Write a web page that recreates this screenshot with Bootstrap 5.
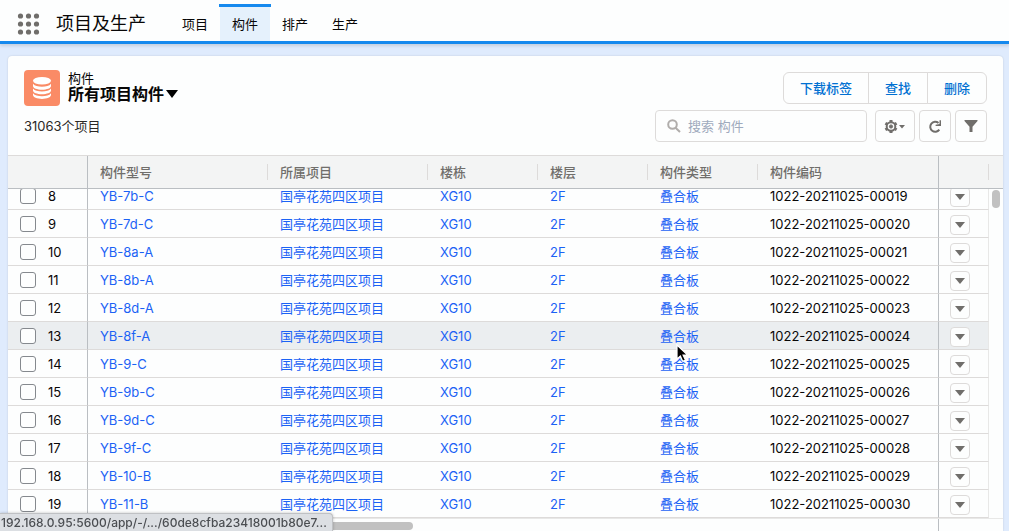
<!DOCTYPE html>
<html lang="zh-CN">
<head>
<meta charset="utf-8">
<meta name="viewport" content="width=device-width, initial-scale=1">
<title>项目及生产</title>
<link href="https://cdn.jsdelivr.net/npm/bootstrap@5.3.0/dist/css/bootstrap.min.css" rel="stylesheet">
<script src="https://cdn.jsdelivr.net/npm/bootstrap@5.3.0/dist/js/bootstrap.bundle.min.js" defer></script>
<style>
body{font-family:Inter,"Noto Sans CJK SC",sans-serif;font-size:13px;line-height:20px;color:#080707;background:#dfebfd}
a{text-decoration:none}
.app-bar{background:#fdfefe;border-bottom:3px solid #1589ee;height:44px;box-shadow:0 2px 3px rgba(0,0,0,.12)}
.launcher{width:24px;height:24px;margin:12px 0 0 16px}
.app-title{font-size:18px;font-weight:400;line-height:28px;margin:10px 24px 0 16px}
.app-tab{color:#080707;padding:14px 12px 7px;line-height:20px}
.app-tab.active{position:relative;background:linear-gradient(transparent 4px,#e5f1fc 4px)}
.app-tab.active::before{content:"";position:absolute;top:4px;left:-1px;right:-1px;height:3px;background:#1589ee}
.panel{background:#fdfefe;border-radius:4px 4px 0 0;margin:12px 6px 0 8px;box-shadow:0 0 2px rgba(0,0,0,.15)}
.panel-head{padding:14px 16px 0}
.actions{margin-top:2px}
.tools{padding:4px 16px 13px}
.object-icon{width:36px;height:36px;border-radius:4px;background:#fa8b66}
.kind{line-height:16px}
.view-btn{font-size:16px;font-weight:700;line-height:16px;color:#080707}
.view-btn svg{margin-left:2px}
.count{line-height:16px;color:#2b2826}
.tool{height:32px;border:1px solid #dddbda;border-radius:4px;background:#fdfefe;color:#706e6b;padding:0}
.tool svg{vertical-align:middle}
.action{height:32px;font-size:13px;font-weight:500;line-height:20px;padding:0 16px;border:1px solid #dddbda;background:#fdfefe;color:#0070d2}
.search{width:212px}
.search input{font-size:13px;color:#3e3e3c}
.search input::placeholder{color:#9faabd;opacity:1}
.gear{width:40px}
.gear svg{margin-left:6px}
.square{width:32px}
.grid{table-layout:fixed;border-collapse:separate;border-spacing:0;width:100%}
.grid th,.grid td{padding:0 12px;white-space:nowrap;vertical-align:middle}
.head-row{background:#f3f4f4;border-top:1px solid #dddbda;border-bottom:1px solid #babec2;padding-right:14px}
.grid th{height:32px;font-weight:500;color:#706e6b;background:linear-gradient(#dddbda,#dddbda) right center/1px 16px no-repeat}
.grid th.edge,.grid td.edge{background:none;border-right:1px solid #babec2}
.grid td{height:28px;border-bottom:1px solid #dddbda}
.grid td a{color:#1b62f5}
.grid td.num{padding:0 0 0 12px}
.grid td.menu-cell{padding:0 0 0 11px;border-right:1px solid #e8e8e7}
.rows{margin-right:14px}
.body-wrap{min-height:0;border-bottom:1px solid #e8e8e7}
.current{background:#ebeef0}
.grid .form-check-input{width:16px;height:16px;margin:0 12px 0 0;border:1px solid #85898e;border-radius:3px;background-color:#fdfefe;flex:none}
.row-menu{width:20px;height:20px;border:1px solid #dddbda;border-radius:4px;background:#fdfefe;padding:0;margin-top:3px}
.v-thumb{right:3px;top:1px;width:8px;height:18px;border-radius:4px;background:#c1c1c1}
.foot{height:12px}
.h-thumb{width:325px;height:8px;margin:3px 0 0 80px;border-radius:4px;background:#c1c1c1}
.foot-edge{width:65px;border-left:1px solid #babec2}
.status{left:0;bottom:0;height:18px;width:333px;padding:0 1px;border:1px solid #bfc1c4;border-left:0;border-bottom:0;border-radius:0 4px 0 0;background:#dcdfe3;color:#4b4e52;font-size:12px;font-weight:500;line-height:18px;box-shadow:0 0 3px rgba(0,0,0,.25);z-index:3}
.pointer{position:absolute;left:28px;top:22px;z-index:2}
.c-num{width:80px}.c-model{width:180px}.c-project{width:160px}.c-mid{width:110px}.c-menu{width:50px}
</style>
</head>
<body class="vh-100 overflow-hidden d-flex flex-column">
<header class="app-bar d-flex align-items-start flex-shrink-0">
  <button class="btn p-0 border-0 launcher d-flex" aria-label="应用启动器">
    <svg width="24" height="24" fill="#706e6b"><circle cx="4.500" cy="4" r="2.600"/><circle cx="12.500" cy="4" r="2.600"/><circle cx="20.500" cy="4" r="2.600"/><circle cx="4.500" cy="12" r="2.600"/><circle cx="12.500" cy="12" r="2.600"/><circle cx="20.500" cy="12" r="2.600"/><circle cx="4.500" cy="20" r="2.600"/><circle cx="12.500" cy="20" r="2.600"/><circle cx="20.500" cy="20" r="2.600"/></svg>
  </button>
  <h1 class="app-title">项目及生产</h1>
  <nav class="d-flex">
    <a class="app-tab" href="#">项目</a><a class="app-tab active" href="#" aria-current="page">构件</a><a class="app-tab" href="#">排产</a><a class="app-tab" href="#">生产</a>
  </nav>
</header>
<main class="panel flex-fill d-flex flex-column overflow-hidden">
  <div class="panel-head d-flex justify-content-between flex-shrink-0">
    <div class="d-flex gap-2">
      <div class="object-icon"><svg class="d-block" width="36" height="36" fill="#fff"><ellipse cx="18" cy="10.800" rx="9" ry="3.800"/><path d="M9 13.700c1.700 2.300 5 3 9 3s7.300-.7 9-3v2.400c0 2.200-4 3.700-9 3.700s-9-1.500-9-3.700zM9 18.600c1.700 2.300 5 3 9 3s7.300-.7 9-3v2c0 2.200-4 3.700-9 3.700s-9-1.500-9-3.700zM9 23.300c1.700 2.300 5 3 9 3s7.300-.7 9-3v1.800c0 2.200-4 3.900-9 3.900s-9-1.700-9-3.900z"/></svg></div>
      <div>
        <div class="kind">构件</div>
        <button class="btn p-0 border-0 view-btn d-flex align-items-center">所有项目构件<svg width="12" height="8"><path d="M0 0h12L6 8z"/></svg></button>
      </div>
    </div>
    <div class="actions btn-group align-self-start">
      <button class="btn action">下载标签</button><button class="btn action">查找</button><button class="btn action">删除</button>
    </div>
  </div>
  <div class="tools d-flex justify-content-between align-items-center flex-shrink-0">
    <div class="count">31063个项目</div>
    <div class="d-flex gap-1">
      <label class="tool search d-flex align-items-center me-1">
        <svg class="ms-2 flex-shrink-0" width="20" height="16" fill="none" stroke="#b0adab" stroke-width="2"><circle cx="8.500" cy="6.500" r="4.300"/><path d="M11.500 9.800l4.500 4.200"/></svg>
        <input class="border-0 bg-transparent p-0 ms-1 w-75" type="text" placeholder="搜索 构件" aria-label="搜索 构件">
      </label>
      <button class="tool gear" aria-label="列表设置"><svg width="30" height="16" fill="none" stroke="#706e6b"><path d="M8 1v13M2.400 4.300l11.200 6.400M2.400 10.700l11.200-6.400" stroke-width="3"/><circle cx="8" cy="7.500" r="4.300" fill="#fdfefe" stroke-width="2"/><circle cx="8" cy="7.500" r="1.600" fill="#706e6b" stroke-width="1"/><path d="M16 6h6l-3 3.500z" fill="#706e6b" stroke="none"/></svg></button>
      <button class="tool square" aria-label="刷新"><svg width="16" height="16"><path d="M12.300 10.700A5 5 0 1 1 11.500 4" fill="none" stroke="#706e6b" stroke-width="2"/><path d="M14 1.300v5.700H8.600v-1.200l3.900-.8V1.300z" fill="#706e6b"/></svg></button>
      <button class="tool square" aria-label="筛选"><svg width="16" height="16" fill="#706e6b"><path d="M1.500 1h13v1L9.500 7.800V13h-3V7.800L1.500 2z"/></svg></button>
    </div>
  </div>
  <div class="head-row flex-shrink-0">
    <table class="grid"><colgroup><col class="c-num"><col class="c-model"><col class="c-project"><col class="c-mid"><col class="c-mid"><col class="c-mid"><col><col class="c-menu"></colgroup>
      <thead><tr><th class="edge"></th><th>构件型号</th><th>所属项目</th><th>楼栋</th><th>楼层</th><th>构件类型</th><th class="edge">构件编码</th><th></th></tr></thead>
    </table>
  </div>
  <div class="body-wrap flex-fill position-relative d-flex flex-column overflow-hidden">
    <div class="rows flex-fill d-flex flex-column justify-content-end overflow-hidden">
      <table class="grid flex-shrink-0"><colgroup><col class="c-num"><col class="c-model"><col class="c-project"><col class="c-mid"><col class="c-mid"><col class="c-mid"><col><col class="c-menu"></colgroup>
        <tbody id="parts"></tbody>
      </table>
    </div>
    <div class="v-thumb position-absolute"></div>
  </div>
  <div class="foot d-flex justify-content-between flex-shrink-0"><div class="h-thumb"></div><div class="foot-edge"></div></div>
</main>
<div class="status position-fixed text-nowrap overflow-hidden">192.168.0.95:5600/app/-/.../60de8cfba23418001b80e7...</div>
<script>
const models = ['YB-7b-C','YB-7d-C','YB-8a-A','YB-8b-A','YB-8d-A','YB-8f-A','YB-9-C','YB-9b-C','YB-9d-C','YB-9f-C','YB-10-B','YB-11-B'];
const cursor = '<svg class="pointer" width="14" height="20"><path d="M1 1v14l3.400-3 2.300 5.200 2.700-1.200-2.300-5h4.500z" stroke="#fff" stroke-width="1.200"/></svg>';
document.getElementById('parts').innerHTML = models.map((m, i) => {
  const n = i + 8, on = n === 13;
  return `<tr class="${on ? 'current' : ''}"><td class="edge num"><label class="d-flex align-items-center"><input class="form-check-input" type="checkbox">${n}</label></td>
  <td><a href="#">${m}</a></td><td><a href="#">国亭花苑四区项目</a></td><td><a href="#">XG10</a></td><td><a href="#">2F</a></td>
  <td class="position-relative"><a href="#">叠合板</a>${on ? cursor : ''}</td><td class="edge">1022-20211025-000${n + 11}</td>
  <td class="menu-cell"><button class="row-menu d-flex align-items-center justify-content-center" aria-label="行操作"><svg width="10" height="6"><path d="M0 0h10L5 6z" fill="#706e6b"/></svg></button></td></tr>`;
}).join('');
</script>
</body>
</html>
